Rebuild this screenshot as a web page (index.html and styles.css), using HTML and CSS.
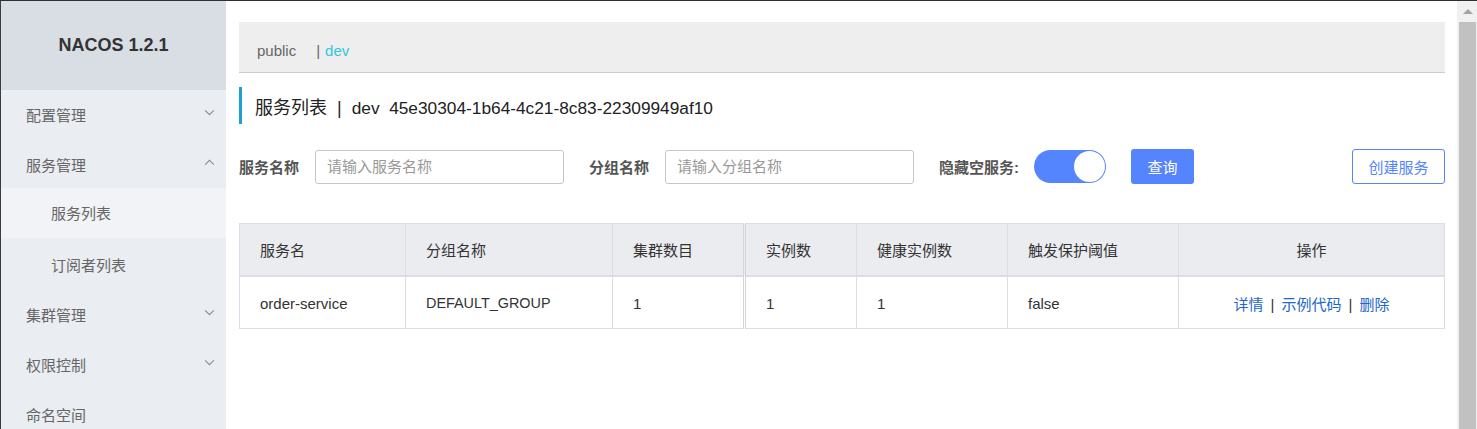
FILE: index.html
```html
<!DOCTYPE html>
<html lang="zh">
<head>
<meta charset="utf-8">
<title>Nacos</title>
<link rel="stylesheet" href="styles.css">
</head>
<body>
<div class="app">
  <aside class="sidebar">
    <div class="brand">NACOS 1.2.1</div>
    <ul class="menu">
      <li class="item"><span>配置管理</span><svg class="chev" viewBox="0 0 12 8"><path d="M1 1.5 L6 6.5 L11 1.5"/></svg></li>
      <li class="item"><span>服务管理</span><svg class="chev" viewBox="0 0 12 8"><path d="M1 6.5 L6 1.5 L11 6.5"/></svg></li>
      <li class="sub active">服务列表</li>
      <li class="sub">订阅者列表</li>
      <li class="item"><span>集群管理</span><svg class="chev" viewBox="0 0 12 8"><path d="M1 1.5 L6 6.5 L11 1.5"/></svg></li>
      <li class="item"><span>权限控制</span><svg class="chev" viewBox="0 0 12 8"><path d="M1 1.5 L6 6.5 L11 1.5"/></svg></li>
      <li class="item"><span>命名空间</span></li>
    </ul>
  </aside>
  <main class="main">
    <div class="ns-bar">
      <span class="ns">public</span><span class="sep">|</span><span class="ns ns-active">dev</span>
    </div>
    <h1 class="title">服务列表 &nbsp;|&nbsp; <span class="latin">dev &nbsp;45e30304-1b64-4c21-8c83-22309949af10</span></h1>
    <div class="search">
      <label class="lbl">服务名称</label>
      <input class="inp" placeholder="请输入服务名称">
      <label class="lbl lbl2">分组名称</label>
      <input class="inp" placeholder="请输入分组名称">
      <label class="lbl lbl3">隐藏空服务:</label>
      <span class="switch"><span class="knob"></span></span>
      <button class="btn-primary">查询</button>
      <span class="spacer"></span>
      <button class="btn-outline">创建服务</button>
    </div>
    <table class="tbl">
      <colgroup>
        <col style="width:166px"><col style="width:207px"><col style="width:132px"><col style="width:112px"><col style="width:151px"><col style="width:171px"><col>
      </colgroup>
      <thead>
        <tr><th>服务名</th><th>分组名称</th><th>集群数目</th><th class="lock">实例数</th><th>健康实例数</th><th>触发保护阈值</th><th class="center">操作</th></tr>
      </thead>
      <tbody>
        <tr><td>order-service</td><td class="narrow">DEFAULT_GROUP</td><td>1</td><td class="lock">1</td><td>1</td><td>false</td><td class="center ops"><a>详情</a><span class="bar">|</span><a>示例代码</a><span class="bar">|</span><a>删除</a></td></tr>
      </tbody>
    </table>
  </main>
  <div class="scrollbar">
    <div class="arrow"></div>
    <div class="thumb"></div>
  </div>
</div>
</body>
</html>
```

FILE: styles.css
```css
* { box-sizing: border-box; }
html, body { margin: 0; padding: 0; height: 100%; }
body {
  font-family: "Liberation Sans", "Noto Sans CJK SC", sans-serif;
  font-size: 15px;
  color: #333;
  background: #fff;
  overflow: hidden;
}
.app {
  display: flex;
  height: 429px;
  border-top: 1px solid #2c2f33;
  border-left: 1px solid #3a3e43;
}
.sidebar {
  width: 225px;
  flex: none;
  background: #eaedf1;
}
.brand {
  height: 89px;
  background: #d9dee4;
  display: flex;
  align-items: center;
  justify-content: center;
  font-weight: bold;
  font-size: 18px;
  color: #333;
  padding-bottom: 1px;
}
.menu { list-style: none; margin: 0; padding: 0; }
.menu li {
  height: 50px;
  display: flex;
  align-items: center;
  color: #666;
  font-size: 15px;
  padding-bottom: 2px;
}
.item { padding: 0 11px 0 25px; justify-content: space-between; }
.sub { padding-left: 50px; }
.sub.active { background: #f2f3f7; margin-top: -2px; margin-bottom: 2px; }
.chev { width: 11px; height: 7px; fill: none; stroke: #8c8c8c; stroke-width: 1.2; margin-top: -4px; }

.main {
  flex: 1;
  padding: 21px 12px 0 13px;
  min-width: 0;
}
.ns-bar {
  background: #eee;
  border-bottom: 1px solid #ccc;
  padding: 19px 18px 11px;
  line-height: 20px;
  color: #666;
}
.ns { color: #666; }
.sep { margin-left: 20px; margin-right: 5px; color: #666; }
.ns-active { color: #33c7e0; }
.title {
  margin: 14px 0 0;
  border-left: 3px solid #1d9fd6;
  padding: 6px 0 0 13px;
  height: 37px;
  line-height: 31px;
  font-size: 18px;
  font-weight: normal;
  color: #222;
  white-space: pre;
}
.title .latin { font-size: 17.3px; }
.search {
  display: flex;
  align-items: center;
  margin-top: 25px;
  height: 35px;
}
.lbl {
  font-weight: bold;
  color: #555;
  font-size: 15px;
  margin-right: 16px;
}
.lbl2 { margin-left: 25px; }
.lbl3 { margin-left: 25px; }
.inp {
  width: 249px;
  height: 34px;
  border: 1px solid #c4c6cf;
  border-radius: 3px;
  padding: 0 11px;
  font-family: inherit;
  font-size: 15px;
  color: #333;
  outline: none;
}
.inp::placeholder { color: #999; }
.switch {
  margin-left: -1px;
  width: 72px;
  height: 33px;
  border-radius: 17px;
  background: #5584ff;
  display: flex;
  align-items: center;
  justify-content: flex-end;
  padding-right: 1px;
}
.knob {
  width: 31px;
  height: 31px;
  border-radius: 50%;
  background: #fff;
}
.btn-primary {
  margin-left: 25px;
  width: 63px;
  height: 35px;
  border: none;
  border-radius: 3px;
  background: #5584ff;
  color: #fff;
  font-family: inherit;
  font-size: 15px;
  padding: 0;
}
.spacer { flex: 1; }
.btn-outline {
  width: 93px;
  height: 35px;
  border: 1px solid #5584ff;
  border-radius: 3px;
  background: #fff;
  color: #5584ff;
  font-family: inherit;
  font-size: 15px;
  padding: 0;
}
.tbl {
  margin-top: 39px;
  width: 100%;
  border-collapse: collapse;
  table-layout: fixed;
  border: 1px solid #dcdee3;
}
.tbl th, .tbl td {
  border-left: 1px solid #dcdee3;
  text-align: left;
  padding: 0 20px;
  font-weight: normal;
  color: #333;
  font-size: 15px;
}
.tbl th {
  background: #ebecf0;
  height: 52px;
  border-bottom: 2px solid #dcdee3;
}
.tbl td { height: 53px; background: #fff; padding-top: 2px; }
.tbl td.narrow { font-size: 14.4px; }
.tbl .lock { border-left: 3px double #d3d5da; }
.tbl .center { text-align: center; }
.ops a { color: #2266cc; }
.ops .bar { color: #333; margin: 0 7px; }
.scrollbar {
  width: 20px;
  flex: none;
  background: #f1f1f1;
  display: flex;
  flex-direction: column;
  padding-left: 2px;
  padding-right: 1px;
}
.arrow {
  height: 21px;
  display: flex;
  align-items: center;
  justify-content: center;
}
.arrow::before {
  content: "";
  border-left: 5px solid transparent;
  border-right: 5px solid transparent;
  border-bottom: 5px solid #a3a3a3;
}
.thumb { flex: 1; background: #c1c1c1; }
```
